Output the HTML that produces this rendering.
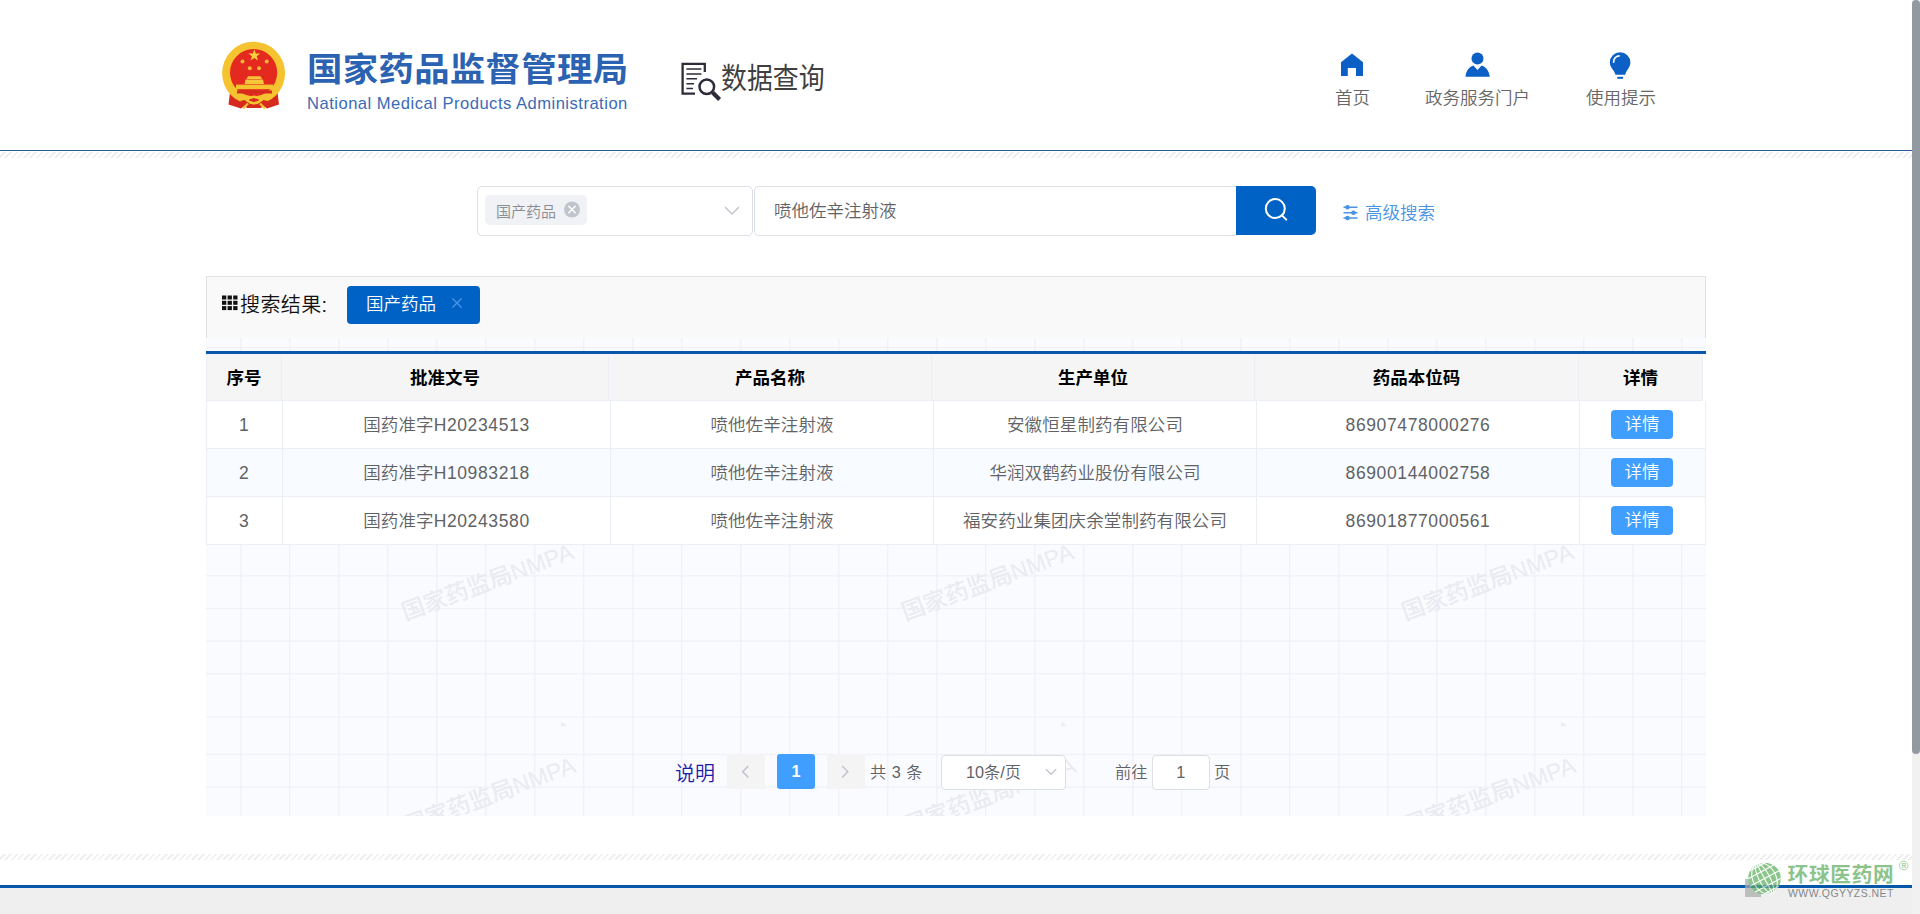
<!DOCTYPE html>
<html lang="zh-CN">
<head>
<meta charset="utf-8">
<title>国家药品监督管理局 数据查询</title>
<style>
*{box-sizing:border-box;margin:0;padding:0}
html,body{width:1920px;height:914px;overflow:hidden;background:#fff}
body{position:relative;font-family:"Liberation Sans","Noto Sans CJK SC",sans-serif;color:#606266;font-size:17.5px;font-weight:350}
.abs{position:absolute}
.t{position:absolute;white-space:nowrap;line-height:1}
/* header */
#hline{left:0;top:150px;width:1912px;height:1px;background:#255d96}
.stripes{left:0;width:1912px;height:6px;background:repeating-linear-gradient(135deg,#fff 0,#fff 2.6px,#efefef 2.6px,#efefef 4.4px)}
#title{left:306.5px;top:52.5px;font-size:33.4px;font-weight:700;color:#2b62b1;letter-spacing:.3px;transform-origin:0 0;transform:scaleX(1.06)}
#sub{left:307px;top:95.7px;font-size:16.6px;color:#3a6bb5;letter-spacing:.48px}
#dq{left:721px;top:65px;font-size:29px;font-weight:400;color:#3f3f3f;transform-origin:0 0;transform:scaleX(.893)}
.nav{font-size:17.5px;color:#666}
/* search */
#sel{left:477px;top:186px;width:276px;height:50px;border:1px solid #dcdfe6;border-radius:5px;background:#fff}
#seltag{left:485px;top:195px;width:102px;height:30px;border-radius:5px;background:#f0f2f5}
#seltag span{left:11px;top:9px;font-size:15px;color:#8a8d93}
#inp{left:754px;top:186px;width:483px;height:50px;border:1px solid #dcdfe6;border-right:0;border-radius:5px 0 0 5px;background:#fff}
#inp span{left:19px;top:16px;font-size:17.5px;color:#606266}
#sbtn{left:1236px;top:186px;width:80px;height:49px;background:#0062c4;border-radius:0 5px 5px 0}
#adv{left:1365px;top:205px;font-size:17.5px;color:#4a94e4}
/* result bar */
#rbar{left:206px;top:276px;width:1500px;height:63px;background:#f9f9f9;border:1px solid #e2e2e2}
#rlabel{left:240px;top:295px;letter-spacing:.4px;font-size:20px;color:#111}
#rtag{left:347px;top:286px;width:133px;height:38px;background:#0062c4;border-radius:4px}
#rtag span{left:19px;top:10px;font-size:17.5px;color:#fff}
/* table area */
#area{left:206px;top:338px;width:1500px;height:478px;background:#fafbff;overflow:hidden}
#tline{left:206px;top:351px;width:1500px;height:3px;background:#0a56ad}
.hc{position:absolute;top:354px;height:47px;background:#f5f5f5;border-right:1px solid #ebeef5;border-bottom:1px solid #ebeef5;color:#000;font-weight:700;font-size:17.5px;text-align:center;line-height:48px;white-space:nowrap}
.row{position:absolute;left:206px;width:1500px;height:48px;background:#fff;border-bottom:1px solid #ebeef5;box-shadow:inset 1px 0 0 #ebeef5}
.row.s{background:#f8fbff}
.c{position:absolute;top:0;height:47px;border-right:1px solid #ebeef5;text-align:center;line-height:48px;font-size:17.5px;color:#606266;white-space:nowrap;letter-spacing:.1px}
.n{letter-spacing:.62px}
.btn{position:absolute;left:1405px;top:9px;width:62px;height:29px;background:#409eff;border-radius:4px;color:#fff;font-size:17.5px;line-height:28px;text-align:center}
/* pagination */
.pg{font-size:16.25px;color:#606266}
.pb{position:absolute;top:754px;width:38px;height:35px;border-radius:3px;background:#f4f4f5}
.box{position:absolute;top:755px;height:35px;border:1px solid #dcdfe6;border-radius:4px;background:#fff}
/* footer */
#fline{left:0;top:885px;width:1912px;height:3px;background:#0457a9}
#fbg{left:0;top:888px;width:1912px;height:26px;background:#efefef}
/* scrollbar */
#sbtrack{left:1912px;top:0;width:8px;height:914px;background:#f1f1f1}
#sbthumb{left:1912px;top:0;width:8px;height:754px;background:#9399a1;border-radius:4px}
</style>
</head>
<body>
<!-- HEADER -->
<div class="abs" id="hline"></div>
<div class="abs stripes" style="top:152px"></div>
<div class="t" id="title">国家药品监督管理局</div>
<div class="t" id="sub">National Medical Products Administration</div>
<div class="t" id="dq">数据查询</div>
<div class="t nav" style="left:1335px;top:90px">首页</div>
<div class="t nav" style="left:1425px;top:90px">政务服务门户</div>
<div class="t nav" style="left:1586px;top:90px">使用提示</div>

<!-- SEARCH -->
<div class="abs" id="sel"></div>
<div class="abs" id="seltag"><span class="t">国产药品</span></div>
<div class="abs" id="inp"><span class="t">喷他佐辛注射液</span></div>
<div class="abs" id="sbtn"></div>
<div class="t" id="adv">高级搜索</div>

<!-- RESULT BAR -->
<div class="abs" id="rbar"></div>
<div class="t" id="rlabel">搜索结果:</div>
<div class="abs" id="rtag"><span class="t">国产药品</span></div>

<!-- TABLE AREA -->
<div class="abs" id="area"><svg class="abs" style="left:0;top:0" width="1500" height="478" viewBox="0 0 1500 478">
<g stroke="#eff1f7" stroke-width="1.2" fill="none"><path d="M34.8 0V478"/><path d="M83.8 0V478"/><path d="M132.8 0V478"/><path d="M181.8 0V478"/><path d="M230.8 0V478"/><path d="M279.8 0V478"/><path d="M328.8 0V478"/><path d="M377.8 0V478"/><path d="M426.8 0V478"/><path d="M475.8 0V478"/><path d="M534.8 0V478"/><path d="M583.8 0V478"/><path d="M632.8 0V478"/><path d="M681.8 0V478"/><path d="M730.8 0V478"/><path d="M779.8 0V478"/><path d="M828.8 0V478"/><path d="M877.8 0V478"/><path d="M926.8 0V478"/><path d="M975.8 0V478"/><path d="M1034.8 0V478"/><path d="M1083.8 0V478"/><path d="M1132.8 0V478"/><path d="M1181.8 0V478"/><path d="M1230.8 0V478"/><path d="M1279.8 0V478"/><path d="M1328.8 0V478"/><path d="M1377.8 0V478"/><path d="M1426.8 0V478"/><path d="M1475.8 0V478"/><path d="M0 9.7H1500"/><path d="M0 42.3H1500"/><path d="M0 74.9H1500"/><path d="M0 107.5H1500"/><path d="M0 140.1H1500"/><path d="M0 172.7H1500"/><path d="M0 205.3H1500"/><path d="M0 237.9H1500"/><path d="M0 270.5H1500"/><path d="M0 303.1H1500"/><path d="M0 335.7H1500"/><path d="M0 379.0H1500"/><path d="M0 416.4H1500"/><path d="M0 449.2H1500"/></g>
<path d="M354.5 388.5 L356 383.5 L361.5 388 Z" fill="#eceef3"/><path d="M854.5 388.5 L856 383.5 L861.5 388 Z" fill="#eceef3"/><path d="M1354.5 388.5 L1356 383.5 L1361.5 388 Z" fill="#eceef3"/><g fill="#eaebf0" font-family="'Liberation Sans','Noto Sans CJK SC',sans-serif" font-size="23.2" font-weight="500"><text x="281.5" y="244.0" transform="rotate(-20.2 281.5 244.0)" text-anchor="middle" dominant-baseline="central">国家药监局NMPA</text><text x="283.5" y="457.5" transform="rotate(-20.2 283.5 457.5)" text-anchor="middle" dominant-baseline="central">国家药监局NMPA</text><text x="781.5" y="244.0" transform="rotate(-20.2 781.5 244.0)" text-anchor="middle" dominant-baseline="central">国家药监局NMPA</text><text x="783.5" y="457.5" transform="rotate(-20.2 783.5 457.5)" text-anchor="middle" dominant-baseline="central">国家药监局NMPA</text><text x="1281.5" y="244.0" transform="rotate(-20.2 1281.5 244.0)" text-anchor="middle" dominant-baseline="central">国家药监局NMPA</text><text x="1283.5" y="457.5" transform="rotate(-20.2 1283.5 457.5)" text-anchor="middle" dominant-baseline="central">国家药监局NMPA</text></g>
</svg></div>
<div class="abs" id="tline"></div>
<div class="abs" style="left:206px;top:354px;width:1500px;height:47px;background:#fff"></div>
<div class="hc" style="left:206px;width:76px;border-left:1px solid #ebeef5">序号</div>
<div class="hc" style="left:282px;width:327px">批准文号</div>
<div class="hc" style="left:609px;width:323px">产品名称</div>
<div class="hc" style="left:932px;width:323px">生产单位</div>
<div class="hc" style="left:1255px;width:324px">药品本位码</div>
<div class="hc" style="left:1579px;width:124px">详情</div>

<div class="row" style="top:401px">
<div class="c" style="left:0;width:77px">1</div>
<div class="c" style="left:77px;width:328px">国药准字<span class="n">H20234513</span></div>
<div class="c" style="left:405px;width:323px">喷他佐辛注射液</div>
<div class="c" style="left:728px;width:323px">安徽恒星制药有限公司</div>
<div class="c" style="left:1051px;width:323px"><span class="n">86907478000276</span></div>
<div class="c" style="left:1374px;width:126px"></div>
<div class="btn">详情</div>
</div>
<div class="row s" style="top:449px">
<div class="c" style="left:0;width:77px">2</div>
<div class="c" style="left:77px;width:328px">国药准字<span class="n">H10983218</span></div>
<div class="c" style="left:405px;width:323px">喷他佐辛注射液</div>
<div class="c" style="left:728px;width:323px">华润双鹤药业股份有限公司</div>
<div class="c" style="left:1051px;width:323px"><span class="n">86900144002758</span></div>
<div class="c" style="left:1374px;width:126px"></div>
<div class="btn">详情</div>
</div>
<div class="row" style="top:497px">
<div class="c" style="left:0;width:77px">3</div>
<div class="c" style="left:77px;width:328px">国药准字<span class="n">H20243580</span></div>
<div class="c" style="left:405px;width:323px">喷他佐辛注射液</div>
<div class="c" style="left:728px;width:323px">福安药业集团庆余堂制药有限公司</div>
<div class="c" style="left:1051px;width:323px"><span class="n">86901877000561</span></div>
<div class="c" style="left:1374px;width:126px"></div>
<div class="btn">详情</div>
</div>

<!-- PAGINATION -->
<div class="t" style="left:675px;top:763.5px;font-size:20px;color:#1c1ca8">说明</div>
<div class="pb" style="left:727px"></div>
<div class="pb" style="left:777px;background:#409eff"><span class="t" style="left:0;width:38px;text-align:center;top:9px;font-size:16.25px;font-weight:700;color:#fff">1</span></div>
<div class="pb" style="left:827px"></div>
<div class="t pg" style="left:870px;top:764px;letter-spacing:.5px">共 3 条</div>
<div class="box" style="left:941px;width:125px"><span class="t pg" style="left:24px;top:8px">10条/页</span></div>
<div class="t pg" style="left:1115px;top:764px">前往</div>
<div class="box" style="left:1152px;width:57.5px"><span class="t pg" style="left:0;width:55.5px;text-align:center;top:8px">1</span></div>
<div class="t pg" style="left:1214px;top:764px">页</div>


<!-- ICONS -->
<svg class="abs" style="left:218px;top:38px" width="72" height="76" viewBox="0 0 72 76">
 <path d="M12.500 50 L10.500 66.500 L23 70.500 L29 66 L36 68.500 L43 66 L49 70.500 L61 66.500 L59 50 Z" fill="#d62a1f"/>
 <circle cx="35.600" cy="35.200" r="31.500" fill="#f5c330"/>
 <path d="M22 63 L29 70 L43 70 L50 63 L36 60Z" fill="#d62a1f"/>
 <circle cx="35.600" cy="34.600" r="23.600" fill="#e42a1e"/>
 <path d="M36.300 11.300 l1.500 4.100 4.400 .1 -3.500 2.700 1.300 4.200 -3.700 -2.500 -3.700 2.500 1.300 -4.200 -3.500 -2.700 4.400 -.1z" fill="#f8d040"/>
 <circle cx="24.500" cy="23.500" r="2" fill="#f3b83a"/><circle cx="48.700" cy="23.500" r="2" fill="#f3b83a"/>
 <circle cx="31.800" cy="30.200" r="2" fill="#f3b83a"/><circle cx="41" cy="30.200" r="2" fill="#f3b83a"/>
 <path d="M30 38.300 h12.500 l1.500 2.700 h-15.500z M27.500 41.600 h17.500 l1 4.300 h-19.500z" fill="#f6c63a"/>
 <rect x="18" y="46.600" width="37" height="4.600" fill="#f5c330"/>
 <path d="M19 52.500 h35 v3 h-35z" fill="#d62a1f"/>
 <path d="M28.500 62 q7.500 -6.500 15 0 q-7.500 6.500 -15 0z" fill="none" stroke="#f5c330" stroke-width="2.400"/>
 <path d="M25 70.500 l5 -5 M47 70.500 l-5 -5" stroke="#f5c330" stroke-width="2.200"/>
</svg>
<svg class="abs" style="left:678px;top:60px" width="46" height="44" viewBox="0 0 46 44" fill="none" stroke="#2f2b3a">
 <path d="M26.8 12 V3.9 H4.6 V33.6 H17" stroke-width="2.3"/>
 <path d="M8.4 9 H23.4 M8.4 13.9 H23.4 M8.4 18.8 H19 M8.4 23.7 H16 M8.4 28.5 H15" stroke-width="1.5"/>
 <circle cx="28.8" cy="26.8" r="7.3" stroke-width="2.5"/>
 <path d="M34.6 32.6 L41.6 39.4" stroke-width="4.2"/>
</svg>
<svg class="abs" style="left:1340px;top:52px" width="24" height="25" viewBox="0 0 24 25">
 <path d="M12 1.4 L23 10.3 V24 H16 V16 H7.800 V24 H1 V10.300Z" fill="#0b5fc5"/>
</svg>
<svg class="abs" style="left:1464px;top:51px" width="28" height="27" viewBox="0 0 28 27">
 <circle cx="13.5" cy="7.600" r="6" fill="#0b5fc5"/>
 <path d="M1.500 25.700 C2 19 6 15.500 9.400 14.400 L13.500 18.900 L17.700 14.400 C21 15.500 25 19 25.800 25.700Z" fill="#0b5fc5"/>
</svg>
<svg class="abs" style="left:1608px;top:50.8px" width="24" height="29" viewBox="0 0 24 29">
 <path d="M12.100 1.200 a10.300 10.300 0 0 1 10.300 10.300 c0 4.800 -4 7.500 -5.200 12.300 h-9.700 c-1.200 -4.800 -5.700 -7.500 -5.700 -12.300 a10.300 10.300 0 0 1 10.300 -10.300z" fill="#0b5fc5"/>
 <rect x="9.300" y="25.800" width="5.800" height="2" fill="#0b5fc5"/>
 <path d="M5.600 11 a6.200 6.200 0 0 1 5.400 -6.200" fill="none" stroke="#fff" stroke-width="1.800" stroke-linecap="round"/>
</svg>
<!-- select tag close / arrow -->
<svg class="abs" style="left:563px;top:201px" width="18" height="18" viewBox="0 0 18 18">
 <circle cx="9" cy="8.500" r="8" fill="#c0c4cc"/>
 <path d="M5.800 5.300 l6.400 6.400 M12.200 5.300 l-6.400 6.400" stroke="#fff" stroke-width="1.500" stroke-linecap="round"/>
</svg>
<svg class="abs" style="left:724px;top:205px" width="16" height="12" viewBox="0 0 16 12">
 <path d="M1.500 2.500 L8 9 L14.500 2.500" fill="none" stroke="#c0c4cc" stroke-width="1.500" stroke-linecap="round" stroke-linejoin="round"/>
</svg>
<!-- search button icon -->
<svg class="abs" style="left:1262px;top:196px" width="28" height="28" viewBox="0 0 28 28">
 <circle cx="13.300" cy="12.600" r="9.500" fill="none" stroke="#fff" stroke-width="2"/>
 <path d="M19.800 19.300 L24.300 23.600" stroke="#fff" stroke-width="2" stroke-linecap="round"/>
</svg>
<!-- advanced icon -->
<svg class="abs" style="left:1342px;top:204px" width="17" height="17" viewBox="0 0 17 17" fill="none" stroke="#4a94e4" stroke-width="1.600">
 <path d="M1.500 3.300 H15.500 M1.500 8.700 H15.500 M1.500 14 H15.500"/>
 <circle cx="5.500" cy="3.300" r="1.500" fill="#4a94e4"/><circle cx="11.500" cy="8.700" r="1.500" fill="#4a94e4"/><circle cx="5.500" cy="14" r="1.500" fill="#4a94e4"/>
</svg>
<!-- grid icon -->
<svg class="abs" style="left:222px;top:295px" width="16" height="16" viewBox="0 0 16 16" fill="#111">
 <rect x="0" y="0.500" width="4.300" height="4"/><rect x="5.600" y="0.500" width="4.300" height="4"/><rect x="11.200" y="0.500" width="4.300" height="4"/>
 <rect x="0" y="5.800" width="4.300" height="4"/><rect x="5.600" y="5.800" width="4.300" height="4"/><rect x="11.200" y="5.800" width="4.300" height="4"/>
 <rect x="0" y="11.100" width="4.300" height="4"/><rect x="5.600" y="11.100" width="4.300" height="4"/><rect x="11.200" y="11.100" width="4.300" height="4"/>
</svg>
<!-- rtag x -->
<svg class="abs" style="left:451px;top:297px" width="12" height="12" viewBox="0 0 12 12">
 <path d="M1.500 1.500 L10.500 10.500 M10.500 1.500 L1.500 10.500" stroke="#4e97e6" stroke-width="1.300"/>
</svg>
<!-- pagination arrows -->
<svg class="abs" style="left:740px;top:764px" width="12" height="16" viewBox="0 0 12 16">
 <path d="M8.300 2 L2.700 7.700 L8.300 13.400" fill="none" stroke="#c0c4cc" stroke-width="1.500"/>
</svg>
<svg class="abs" style="left:839px;top:764px" width="12" height="16" viewBox="0 0 12 16">
 <path d="M3.200 2 L8.800 7.700 L3.200 13.400" fill="none" stroke="#c0c4cc" stroke-width="1.500"/>
</svg>
<svg class="abs" style="left:1044px;top:767px" width="14" height="10" viewBox="0 0 14 10">
 <path d="M2.200 2.500 L7 7.200 L11.800 2.500" fill="none" stroke="#c0c4cc" stroke-width="1.300" stroke-linecap="round" stroke-linejoin="round"/>
</svg>

<!-- FOOTER -->
<div class="abs stripes" style="top:854px"></div>
<div class="abs" id="fline"></div>
<div class="abs" id="fbg"></div>


<!-- CORNER LOGO -->
<div class="abs" style="left:0;top:0;width:1912px;height:914px;opacity:.72;overflow:hidden">
<div class="abs" style="left:1745px;top:879px;width:16px;height:18px;background:#a9aea9"></div>
<svg class="abs" style="left:1746px;top:860.5px" width="38" height="36" viewBox="0 1 38 36">
 <ellipse cx="18.500" cy="18.500" rx="16.400" ry="15.800" fill="#5faf5f"/>
 <g fill="none" stroke="#ffffff" stroke-width="1.100" transform="rotate(-28 18.500 18.500)">
  <path d="M2 18.500H35M4 11H33M4 26H33M9.500 5H27.500M9.500 32H27.500"/>
  <path d="M18.500 2V35"/>
  <ellipse cx="18.500" cy="18.500" rx="5.500" ry="16.500"/>
  <ellipse cx="18.500" cy="18.500" rx="11.500" ry="16.500"/>
 </g>
</svg>
<div class="t" style="left:1787.500px;top:864.6px;font-size:20.6px;font-weight:700;color:#5fac5f;letter-spacing:.8px">环球医药网</div>
<div class="t" style="left:1788px;top:888px;font-size:10.5px;color:#5f5f5f;letter-spacing:.43px;font-weight:400">WWW.QGYYZS.NET</div>
<svg class="abs" style="left:1898px;top:860px" width="12" height="12" viewBox="0 0 12 12">
 <circle cx="5.800" cy="5.500" r="4.300" fill="none" stroke="#7eba7e" stroke-width=".9"/>
 <text x="5.800" y="8" font-size="6.500" font-family="'Liberation Sans',sans-serif" font-weight="700" text-anchor="middle" fill="#7eba7e">R</text>
</svg>
</div>

<!-- SCROLLBAR -->
<div class="abs" id="sbtrack"></div>
<div class="abs" id="sbthumb"></div>
</body>
</html>
